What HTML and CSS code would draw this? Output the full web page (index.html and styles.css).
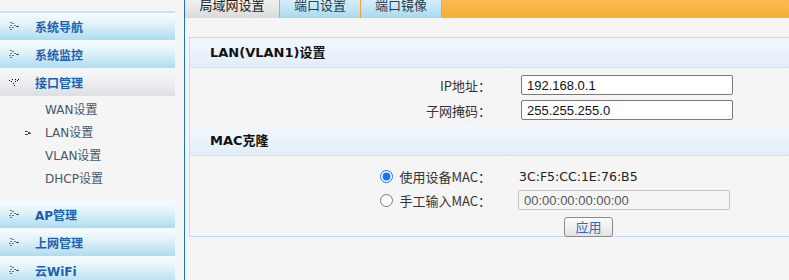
FILE: index.html
```html
<!DOCTYPE html>
<html lang="zh-CN">
<head>
    <meta charset="UTF-8">
    <meta name="viewport" content="width=device-width, initial-scale=1.0">
    <title>局域网设置</title>
    <link rel="stylesheet" href="styles.css">
</head>
<body>
    <div id="page">
        <div id="sidebar">
            <div class="menu-top"></div>
            <div class="menu-item">
                <svg class="menu-icon" width="10" height="9" viewBox="0 0 10 9"><path d="M1 0h1v1H1zM3 1h1v1H3zM5 3h1v1H5zM3 5h1v1H3zM1 7h1v1H1zM1 3h1v1H1zM0 5h1v1H0zM7 4h2v1H7z" fill="#000"/></svg>
                <span>系统导航</span>
            </div>
            <div class="menu-item">
                <svg class="menu-icon" width="10" height="9" viewBox="0 0 10 9"><path d="M1 0h1v1H1zM3 1h1v1H3zM5 3h1v1H5zM3 5h1v1H3zM1 7h1v1H1zM1 3h1v1H1zM0 5h1v1H0zM7 4h2v1H7z" fill="#000"/></svg>
                <span>系统监控</span>
            </div>
            <div class="menu-item open">
                <svg class="menu-icon" width="11" height="8" viewBox="0 0 11 8"><path d="M0 1h1v1H0zM2 2h1v1H2zM4 4h1v1H4zM6 2h1v1H6zM8 1h1v1H8zM3 0h1v1H3zM6 0h1v1H6zM9 0h1v1H9zM5 6h1v1H5z" fill="#000"/></svg>
                <span>接口管理</span>
            </div>
            <ul class="submenu">
                <li>WAN设置</li>
                <li class="current">
                    <svg class="sub-icon" width="7" height="5" viewBox="0 0 7 5"><path d="M0 0h3v1H0zM0 3h3v1H0zM3 1h2v1H3zM3 2h3v1H3z" fill="#3a4a5c"/></svg>
                    LAN设置
                </li>
                <li>VLAN设置</li>
                <li>DHCP设置</li>
            </ul>
            <div class="menu-item">
                <svg class="menu-icon" width="10" height="9" viewBox="0 0 10 9"><path d="M1 0h1v1H1zM3 1h1v1H3zM5 3h1v1H5zM3 5h1v1H3zM1 7h1v1H1zM1 3h1v1H1zM0 5h1v1H0zM7 4h2v1H7z" fill="#000"/></svg>
                <span>AP管理</span>
            </div>
            <div class="menu-item">
                <svg class="menu-icon" width="10" height="9" viewBox="0 0 10 9"><path d="M1 0h1v1H1zM3 1h1v1H3zM5 3h1v1H5zM3 5h1v1H3zM1 7h1v1H1zM1 3h1v1H1zM0 5h1v1H0zM7 4h2v1H7z" fill="#000"/></svg>
                <span>上网管理</span>
            </div>
            <div class="menu-item">
                <svg class="menu-icon" width="10" height="9" viewBox="0 0 10 9"><path d="M1 0h1v1H1zM3 1h1v1H3zM5 3h1v1H5zM3 5h1v1H3zM1 7h1v1H1zM1 3h1v1H1zM0 5h1v1H0zM7 4h2v1H7z" fill="#000"/></svg>
                <span>云WiFi</span>
            </div>
        </div>

        <div id="main">
            <div class="tabs">
                <div class="tab active">局域网设置</div>
                <div class="tab">端口设置</div>
                <div class="tab">端口镜像</div>
                <div class="tab-fill"></div>
            </div>

            <div class="panel">
                <div class="panel-head">LAN(VLAN1)设置</div>
                <div class="form form-lan">
                    <label class="label">IP地址：</label>
                    <div class="value"><input type="text" class="text-input" value="192.168.0.1"></div>
                    <label class="label">子网掩码：</label>
                    <div class="value"><input type="text" class="text-input" value="255.255.255.0"></div>
                </div>

                <div class="panel-head">MAC克隆</div>
                <div class="form form-mac">
                    <label class="label"><input type="radio" name="mac" checked>使用设备MAC：</label>
                    <div class="value mac-text">3C:F5:CC:1E:76:B5</div>
                    <label class="label"><input type="radio" name="mac">手工输入MAC：</label>
                    <div class="value"><input type="text" class="text-input" value="00:00:00:00:00:00" disabled></div>
                    <div></div>
                    <div class="value"><button class="apply-btn">应用</button></div>
                </div>
            </div>
        </div>
    </div>
</body>
</html>
```

FILE: styles.css
```css
html, body {
    margin: 0;
    padding: 0;
    height: 100%;
    overflow: hidden;
}
body {
    background-color: #f5f5f5;
    font-family: "Noto Sans CJK SC", sans-serif;
    font-size: 13px;
    color: #333;
}
#page {
    display: flex;
    height: 100%;
}

/* left menu */
#sidebar {
    width: 175px;
    flex-shrink: 0;
    padding-top: 11px;
}
.menu-top {
    height: 2px;
    background-color: #d6dfe8;
}
.menu-item {
    display: flex;
    align-items: center;
    height: 27px;
    border-bottom: 1px solid #f2f8fc;
    padding-left: 9px;
    background: linear-gradient(to bottom, #f7fcfe 0%, #e0f2fa 40%, #aedcf0 100%);
    font-family: "DejaVu Sans", "Noto Sans CJK SC", sans-serif;
    font-size: 12px;
    font-weight: bold;
    color: #1d5fae;
}
.menu-item.open {
    background: linear-gradient(to bottom, #f6f7f8 0%, #eceef0 50%, #dcdfe2 100%);
    border-bottom-color: #f5f5f5;
}
.menu-icon {
    width: 11px;
    margin-right: 15px;
}
.submenu {
    list-style: none;
    margin: 0;
    padding: 2px 0 10px 0;
}
.submenu li {
    position: relative;
    height: 23px;
    line-height: 23px;
    padding-left: 45px;
    font-family: "DejaVu Sans", "Noto Sans CJK SC", sans-serif;
    font-size: 12px;
    color: #4a5766;
}
.sub-icon {
    position: absolute;
    left: 25px;
    top: 9px;
}

/* right content */
#main {
    flex: 1;
    margin-left: 9px;
    border-left: 1px solid #1f6fc8;
    margin-right: -6px;
}
.tabs {
    display: flex;
    height: 28px;
    margin-top: -10px;
}
.tab {
    width: 80px;
    height: 28px;
    line-height: 29px;
    text-align: center;
    font-size: 13px;
    color: #2c3a4c;
    border-right: 1px solid #f2a43a;
    background: linear-gradient(to bottom, #e6f5fc 0%, #cdeaf7 50%, #a9d9ef 100%);
}
.tab.active {
    width: 94px;
    color: #222;
    background: linear-gradient(to bottom, #f6f6f6 0%, #ececec 50%, #dadada 100%);
}
.tab-fill {
    flex: 1;
    background: linear-gradient(to bottom, #f9be5a 0%, #f8b748 60%, #f5ad38 100%);
}

.panel {
    margin: 19px 0 0 4px;
    border: 1px solid #c9d9ee;
    border-right: 0;
    background-color: #f5f5f5;
}
.panel-head {
    height: 29px;
    line-height: 30px;
    padding-left: 20px;
    border-bottom: 1px solid #d3e1f2;
    background: linear-gradient(to bottom, #f3f7fd 0%, #eaf2fb 50%, #e2edf9 100%);
    font-family: "DejaVu Sans", "Noto Sans CJK SC", sans-serif;
    font-size: 13px;
    font-weight: bold;
    color: #111;
}

.form {
    display: grid;
    grid-template-columns: 301px 1fr;
    column-gap: 30px;
    align-items: center;
}
.form-lan {
    padding: 7px 0 6px 0;
    row-gap: 5px;
}
.form-mac {
    padding: 10px 0 2px 0;
    grid-template-rows: 20px 20px 20px;
    row-gap: 4px;
}
.form-mac .value:last-child {
    margin-top: 5px;
}
.label {
    display: flex;
    align-items: center;
    justify-content: flex-end;
    height: 20px;
    font-size: 13px;
    color: #333;
}
.label input[type="radio"] {
    width: 13px;
    height: 13px;
    margin: 0 6px 0 0;
    accent-color: #1a73e8;
}
.value {
    display: flex;
    align-items: center;
    height: 20px;
}
.mac-text {
    font-family: "DejaVu Sans", sans-serif;
    font-size: 12.5px;
    color: #222;
    margin-left: -2px;
}
.text-input {
    box-sizing: border-box;
    width: 212px;
    height: 20px;
    padding: 0 5px;
    border: 1px solid #7a7a7a;
    border-radius: 2px;
    background-color: #fff;
    font-family: "Liberation Sans", Arial, sans-serif;
    font-size: 13px;
    color: #111;
    outline: none;
}
.text-input:disabled {
    margin-left: -3px;
    border-color: #c6c6c6;
    background-color: #f5f5f5;
    color: #555;
}
.apply-btn {
    box-sizing: border-box;
    width: 49px;
    height: 20px;
    margin-left: 43px;
    padding: 0;
    border: 1px solid #8a8a8a;
    border-radius: 3px;
    background: linear-gradient(to bottom, #fbfbfb 0%, #eeeeee 60%, #e2e2e2 100%);
    font-family: "Noto Sans CJK SC", sans-serif;
    font-size: 13px;
    color: #3466c8;
    line-height: 18px;
}
```
